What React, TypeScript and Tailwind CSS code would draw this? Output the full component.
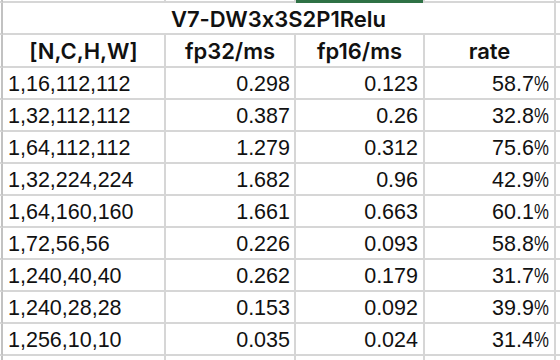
import React from "react";

const rows: [string, string, string, string][] = [
  ["1,16,112,112", "0.298", "0.123", "58.7%"],
  ["1,32,112,112", "0.387", "0.26", "32.8%"],
  ["1,64,112,112", "1.279", "0.312", "75.6%"],
  ["1,32,224,224", "1.682", "0.96", "42.9%"],
  ["1,64,160,160", "1.661", "0.663", "60.1%"],
  ["1,72,56,56", "0.226", "0.093", "58.8%"],
  ["1,240,40,40", "0.262", "0.179", "31.7%"],
  ["1,240,28,28", "0.153", "0.092", "39.9%"],
  ["1,256,10,10", "0.035", "0.024", "31.4%"],
];

const cell = "border-r-2 border-b-2 border-[#d6d6d6]";
const edge = "border-r-2 border-b-2 border-[#d6d6d6] border-r-[#c2c2c2]";
const head =
  "font-['Inter','Noto_Sans_CJK_SC',sans-serif] font-semibold text-[22px] text-[#111] [font-feature-settings:'calt'_0]";
const data = "font-['Liberation_Sans',Arial,sans-serif] text-[21.5px] text-[#111]";

function Rate({ v }: { v: string }) {
  const num = v.slice(0, -1);
  return (
    <span>
      {num}
      <span className="inline-block scale-x-[0.78] origin-left -mr-[4px]">%</span>
    </span>
  );
}

export default function App() {
  return (
    <div className="w-[560px] h-[360px] overflow-hidden bg-white">
      <div className="grid grid-cols-[3px_163px_130px_129px_131px_40px] grid-rows-[3px_32px_33px_repeat(10,32px)]">
        {/* top strip */}
        <div className={edge} />
        <div className={cell} />
        <div className={cell} />
        <div className="bg-[#2e7145] border-r-2 border-[#d6d6d6]" />
        <div className={cell} />
        <div className="border-b-2 border-[#d6d6d6]" />

        {/* title row */}
        <div className={edge} />
        <div className={`${cell} col-span-4 flex items-center justify-center pt-[2px] ${head}`}>
          V7-DW3x3S2P1Relu
        </div>
        <div className="border-b-2 border-[#d6d6d6]" />

        {/* header row */}
        <div className={edge} />
        <div className={`${cell} flex items-center justify-center pt-[2px] ${head}`}>[N,C,H,W]</div>
        <div className={`${cell} flex items-center justify-center pt-[2px] ${head}`}>fp32/ms</div>
        <div className={`${cell} flex items-center justify-center pt-[2px] ${head}`}>fp16/ms</div>
        <div className={`${cell} flex items-center justify-center pt-[2px] ${head}`}>rate</div>
        <div className="border-b-2 border-[#d6d6d6]" />

        {rows.map((r, i) => (
          <React.Fragment key={i}>
            <div className={edge} />
            <div className={`${cell} flex items-center pl-[5px] pt-[2px] ${data}`}>{r[0]}</div>
            <div className={`${cell} flex items-center justify-end pr-[4px] pt-[2px] ${data}`}>{r[1]}</div>
            <div className={`${cell} flex items-center justify-end pr-[5px] pt-[2px] ${data}`}>{r[2]}</div>
            <div className={`${cell} flex items-center justify-end pr-[5px] pt-[2px] ${data}`}>
              <Rate v={r[3]} />
            </div>
            <div className="border-b-2 border-[#d6d6d6]" />
          </React.Fragment>
        ))}

        {/* extra partial row */}
        <div className={edge} />
        <div className={cell} />
        <div className={cell} />
        <div className={cell} />
        <div className={cell} />
        <div className="border-b-2 border-[#d6d6d6]" />
      </div>
    </div>
  );
}
